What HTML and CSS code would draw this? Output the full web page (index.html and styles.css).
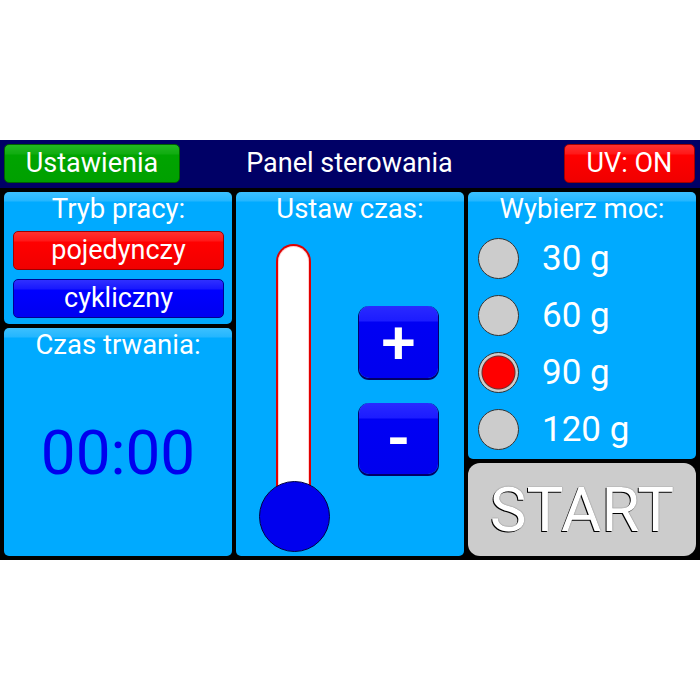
FILE: index.html
```html
<!DOCTYPE html>
<html lang="pl">
<head>
<meta charset="utf-8">
<title>Panel sterowania</title>
<link rel="stylesheet" href="styles.css">
</head>
<body>
<div class="app">
  <header class="topbar">
    <button class="btn btn-green hdr-left">Ustawienia</button>
    <div class="hdr-title">Panel sterowania</div>
    <button class="btn btn-red hdr-right">UV: ON</button>
  </header>
  <main class="grid">
    <div class="col">
      <section class="panel mode">
        <div class="ptitle">Tryb pracy:</div>
        <button class="btn btn-red mode-btn">pojedynczy</button>
        <button class="btn btn-blue mode-btn">cykliczny</button>
      </section>
      <section class="panel duration">
        <div class="ptitle">Czas trwania:</div>
        <div class="time">00:00</div>
      </section>
    </div>
    <section class="panel setter">
      <div class="ptitle">Ustaw czas:</div>
      <div class="setter-body">
        <div class="slider">
          <div class="track"></div>
          <div class="knob"></div>
        </div>
        <div class="pm">
          <button class="pmbtn">+</button>
          <button class="pmbtn minus">-</button>
        </div>
      </div>
    </section>
    <div class="col">
      <section class="panel power">
        <div class="ptitle">Wybierz moc:</div>
        <div class="opt"><span class="radio"></span><span class="olabel">30 g</span></div>
        <div class="opt"><span class="radio"></span><span class="olabel">60 g</span></div>
        <div class="opt"><span class="radio on"></span><span class="olabel">90 g</span></div>
        <div class="opt"><span class="radio"></span><span class="olabel">120 g</span></div>
      </section>
      <button class="start">START</button>
    </div>
  </main>
</div>
</body>
</html>
```
FILE: styles.css
```css
* { box-sizing: border-box; }
html, body { margin: 0; padding: 0; background: #ffffff; }
body { font-family: Roboto, "Liberation Sans", sans-serif; }

.app {
  margin-top: 140px;
  width: 700px;
  height: 420px;
  background: #000000;
  display: flex;
  flex-direction: column;
}

.topbar {
  height: 48px;
  background: #000066;
  display: grid;
  grid-template-columns: 1fr auto 1fr;
  align-items: start;
  padding: 4px 5px 0 4px;
}
.hdr-left { justify-self: start; width: 176px; }
.hdr-right { justify-self: end; width: 131px; }
.hdr-title {
  color: #ffffff;
  font-size: 27px;
  line-height: 38px;
  text-align: center;
}

.btn {
  font-family: inherit;
  color: #ffffff;
  font-size: 27px;
  height: 39px;
  line-height: 37px;
  padding: 0;
  border-radius: 5px;
  cursor: pointer;
}
.btn-green {
  background: linear-gradient(#22b822 0, #10ac10 9px, #00a400 10px, #00a000 100%);
  border: 1px solid #006000;
}
.btn-red {
  background: linear-gradient(#ff3030 0, #ff1818 9px, #ff0000 10px, #f00000 100%);
  border: 1px solid #a00000;
}
.btn-blue {
  background: linear-gradient(#3030ff 0, #1818ff 9px, #0000ff 10px, #0000f0 100%);
  border: 1px solid #000090;
}

.grid {
  flex: 1;
  display: grid;
  grid-template-columns: 228px 228px 228px;
  gap: 4px;
  padding: 4px;
}
.col {
  display: flex;
  flex-direction: column;
  gap: 4px;
}

.panel {
  background: linear-gradient(#3cc0ff 0, #24b6ff 9px, #00aaff 10px, #00aaff 100%);
  border-radius: 5px;
  color: #ffffff;
}
.ptitle {
  font-size: 27.5px;
  line-height: 34px;
  text-align: center;
  white-space: nowrap;
}

.mode {
  height: 132px;
  display: flex;
  flex-direction: column;
  padding: 0 8px 0 9px;
}
.mode .ptitle { margin-bottom: 5px; }
.mode-btn {
  width: 100%;
  height: 40px;
  font-size: 27px;
  line-height: 37px;
  margin-bottom: 9px;
}

.duration {
  flex: 1;
  display: flex;
  flex-direction: column;
}
.time {
  color: #0000ee;
  font-size: 62px;
  line-height: 62px;
  text-align: center;
  margin-top: 60px;
}

.setter {
  display: flex;
  flex-direction: column;
}
.setter-body {
  display: flex;
  padding-top: 18px;
}
.slider {
  position: relative;
  width: 71px;
  height: 308px;
  margin-left: 23px;
}
.track {
  width: 35px;
  height: 270px;
  margin-left: 17px;
  background: #ffffff;
  border: 2px solid #e00000;
  border-bottom: none;
  border-radius: 18px 18px 0 0;
  box-shadow: inset 0 0 0 1px #ffd0d0;
}
.knob {
  position: absolute;
  left: 0;
  bottom: 0;
  width: 71px;
  height: 71px;
  border-radius: 50%;
  background: #0000ee;
  border: 1px solid #000044;
}
.pm {
  display: flex;
  flex-direction: column;
  gap: 25px;
  margin-left: 29px;
  padding-top: 62px;
}
.pmbtn {
  width: 79px;
  height: 72px;
  padding: 0;
  border: none;
  border-radius: 10px;
  background: linear-gradient(#2a2aff 0, #1c1cff 15px, #0000f4 16px, #0000ee 100%);
  box-shadow: 0 1px 0 1px #000066;
  color: #ffffff;
  font-family: inherit;
  font-weight: 500;
  font-size: 62px;
  line-height: 70px;
  cursor: pointer;
}
.pmbtn.minus { height: 71px; font-weight: bold; font-size: 60px; line-height: 66px; }

.power {
  height: 267px;
  display: flex;
  flex-direction: column;
}
.power .ptitle { height: 38px; }
.opt {
  height: 57px;
  display: flex;
  align-items: center;
  padding-left: 10px;
}
.radio {
  width: 41px;
  height: 41px;
  border-radius: 50%;
  background: #cccccc;
  border: 1.5px solid #333333;
  flex: none;
}
.radio.on {
  background: radial-gradient(circle, #ff0000 0, #ff0000 15.5px, #663333 16.5px, #cccccc 17.5px);
}
.olabel {
  margin-left: 23px;
  font-size: 35px;
  line-height: 40px;
  color: #ffffff;
}

.start {
  flex: 1;
  width: 100%;
  background: #cccccc;
  border: none;
  border-radius: 12px;
  padding: 0;
  color: #ffffff;
  font-family: inherit;
  font-size: 62px;
  line-height: 60px;
  text-shadow: -1px 1px 0 #000000, 0 0 1px #333333;
  cursor: pointer;
}
```
